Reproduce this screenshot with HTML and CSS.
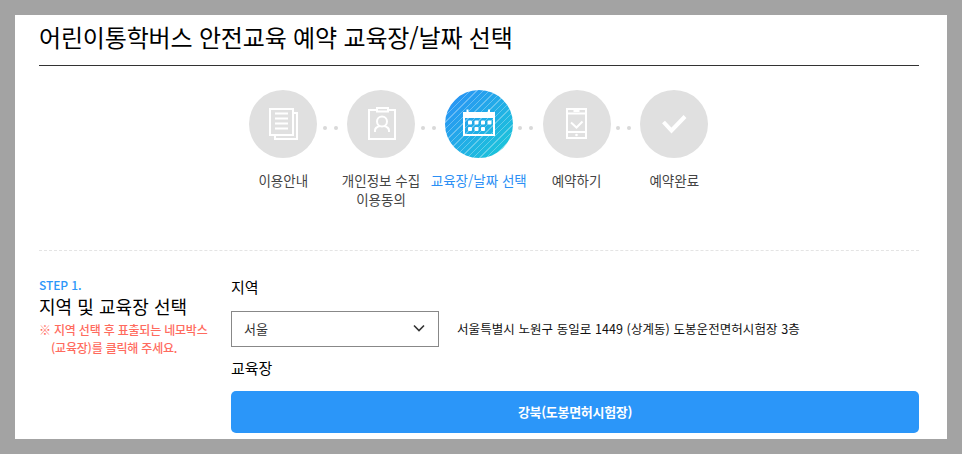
FILE: index.html
```html
<!DOCTYPE html>
<html lang="ko">
<head>
<meta charset="utf-8">
<title>교육장/날짜 선택</title>
<link rel="stylesheet" href="styles.css">
</head>
<body>
<main class="panel">
  <h1 class="title">어린이통학버스 안전교육 예약 교육장/날짜 선택</h1>
  <ol class="steps">
    <li class="step">
      <span class="circle">
        <svg class="icon" viewBox="0 0 68 68"><path d="M21 19h23v26H21zM44 23h4v26H26v-4M26 23.500h13M26 28.500h13M26 33.500h13M26 38.500h13"/></svg>
      </span>
      <span class="label">이용안내</span>
    </li>
    <li class="step">
      <span class="circle">
        <svg class="icon" viewBox="0 0 68 68"><path d="M29 20h-7v29h26V20h-7M30 18h11v3.500H30z"/><circle cx="35" cy="31.500" r="5"/><path d="M28 42v-1.500c0-3 3-4 5-4.500M42 42v-1.500c0-3-3-4-5-4.500"/></svg>
      </span>
      <span class="label">개인정보 수집<br>이용동의</span>
    </li>
    <li class="step is-active">
      <span class="circle">
        <svg class="icon" viewBox="0 0 68 68"><path d="M19 25h30v20H19zM22.500 19.500v4M44 19.500v4"/><g class="fill"><rect x="18" y="22" width="32" height="6"/><rect x="23" y="30.500" width="4" height="4" rx="1"/><rect x="29.500" y="30.500" width="4" height="4" rx="1"/><rect x="36" y="30.500" width="4" height="4" rx="1"/><rect x="42.500" y="30.500" width="4" height="4" rx="1"/><rect x="23" y="37" width="4" height="4" rx="1"/><rect x="29.500" y="37" width="4" height="4" rx="1"/><rect x="36" y="37" width="4" height="4" rx="1"/></g></svg>
      </span>
      <span class="label">교육장/날짜 선택</span>
    </li>
    <li class="step">
      <span class="circle">
        <svg class="icon" viewBox="0 0 68 68"><path d="M24 19h19v29H24zM24 23.500h19M24 42h19M30.500 21h6M28 32.500l5.500 5 6-6"/><circle class="fill" cx="33.500" cy="45" r="1.300"/></svg>
      </span>
      <span class="label">예약하기</span>
    </li>
    <li class="step">
      <span class="circle">
        <svg class="icon icon-check" viewBox="0 0 68 68"><path d="M23.500 32l8 8.500 13.500-14"/></svg>
      </span>
      <span class="label">예약완료</span>
    </li>
  </ol>
  <section class="form">
    <div class="intro">
      <p class="step-no">STEP 1.</p>
      <h2 class="intro-title">지역 및 교육장 선택</h2>
      <p class="note">※ 지역 선택 후 표출되는 네모박스<br><span class="note-indent">(교육장)를 클릭해 주세요.</span></p>
    </div>
    <div class="fields">
      <h3 class="field-label">지역</h3>
      <div class="region-row">
        <div class="select">
          <span>서울</span>
          <svg class="chevron" viewBox="0 0 12 8"><path d="M1 1.500l5 5 5-5"/></svg>
        </div>
        <p class="address">서울특별시 노원구 동일로 1449 (상계동) 도봉운전면허시험장 3층</p>
      </div>
      <h3 class="field-label field-label-2">교육장</h3>
      <button class="place" type="button">강북(도봉면허시험장)</button>
    </div>
  </section>
</main>
</body>
</html>
```
FILE: styles.css
```css
* { box-sizing: border-box; }
html, body { margin: 0; height: 100%; }
body {
  background: #a3a3a3;
  padding: 15px;
  font-family: "Noto Sans CJK KR", "Noto Sans", sans-serif;
  color: #111;
  overflow: hidden;
}
.panel {
  background: #fff;
  width: 932px;
  height: 424px;
  padding: 0 28px 0 24px;
  overflow: hidden;
}
.title {
  margin: 0;
  height: 51px;
  border-bottom: 1px solid #333;
  font-size: 24px;
  font-weight: 400;
  letter-spacing: -0.17px;
  line-height: 44px;
  color: #000;
}
.steps {
  list-style: none;
  margin: 0;
  padding: 24px 0.5px 0 0;
  height: 185px;
  border-bottom: 1px dashed #e4e4e4;
  display: flex;
  justify-content: center;
}
.step {
  position: relative;
  width: 97.75px;
  display: flex;
  flex-direction: column;
  align-items: center;
}
.step:not(:last-child)::after {
  content: "";
  position: absolute;
  left: 88.5px;
  top: 36px;
  width: 4px;
  height: 4px;
  border-radius: 50%;
  background: #d9d9d9;
  box-shadow: 11px 0 0 #d9d9d9;
}
.circle {
  width: 68px;
  height: 68px;
  border-radius: 50%;
  background: #e0e0e0;
  display: flex;
  align-items: center;
  justify-content: center;
}
.is-active .circle {
  background:
    repeating-linear-gradient(135deg, rgba(255,255,255,.3) 0 1px, transparent 1px 4.5px),
    linear-gradient(135deg, #2b8ef8, #19cbd6);
}
.icon {
  width: 68px;
  height: 68px;
  fill: none;
  stroke: #fff;
  stroke-width: 2;
}
.fill { fill: #fff; stroke: none; }
.icon-check { stroke-width: 4; }
.label {
  margin-top: 13px;
  font-size: 13.5px;
  line-height: 19px;
  color: #444;
  text-align: center;
  white-space: nowrap;
}
.is-active .label { color: #2b8ff5; }
.form {
  display: flex;
  padding-top: 25px;
}
.intro { width: 192px; flex: none; }
.step-no {
  margin: 0;
  font-size: 12px;
  line-height: 18px;
  font-weight: 500;
  letter-spacing: -0.1px;
  color: #2b96f9;
}
.intro-title {
  margin: 0;
  font-size: 18px;
  font-weight: 400;
  line-height: 24px;
  letter-spacing: 0.05px;
  color: #000;
}
.note {
  margin: 3px 0 0;
  font-size: 12px;
  line-height: 18px;
  font-weight: 500;
  letter-spacing: -0.2px;
  color: #ff6b5e;
}
.note-indent { padding-left: 12px; }
.fields { flex: 1; margin-top: -1px; }
.field-label {
  margin: 0;
  font-size: 15px;
  font-weight: 400;
  line-height: 24px;
  color: #000;
}
.region-row {
  display: flex;
  align-items: center;
  margin-top: 12px;
}
.select {
  width: 208px;
  height: 36px;
  border: 1px solid #888;
  padding: 0 13px 2px 12px;
  display: flex;
  align-items: center;
  justify-content: space-between;
  font-size: 13px;
  color: #333;
}
.chevron {
  width: 12px;
  height: 8px;
  fill: none;
  stroke: #333;
  stroke-width: 1.600;
}
.address {
  margin: 0 0 1px 18px;
  font-size: 12.5px;
  letter-spacing: 0.07px;
  color: #111;
}
.field-label-2 { margin-top: 9px; }
.place {
  display: block;
  width: 100%;
  height: 42px;
  margin-top: 11px;
  padding: 0 0 2px;
  border: 0;
  border-radius: 5px;
  background: #2b96f9;
  color: #fff;
  font: 700 13px "Noto Sans CJK KR", sans-serif;
  letter-spacing: -0.3px;
}
```
